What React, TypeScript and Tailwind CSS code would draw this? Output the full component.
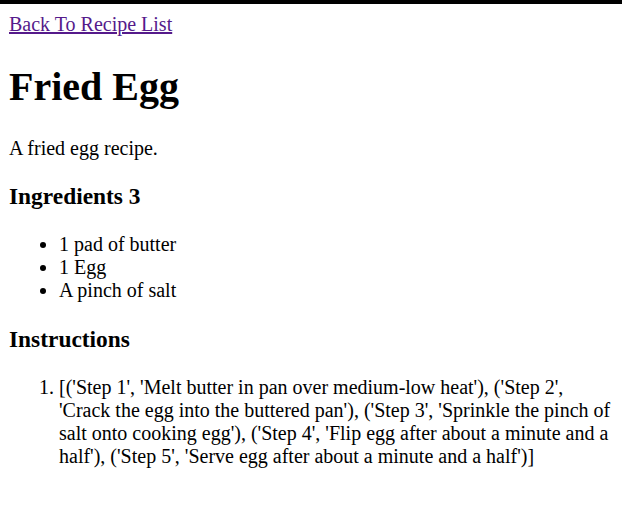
export default function App() {
  const ingredients = ["1 pad of butter", "1 Egg", "A pinch of salt"];
  const steps = [
    "[('Step 1', 'Melt butter in pan over medium-low heat'), ('Step 2', 'Crack the egg into the buttered pan'), ('Step 3', 'Sprinkle the pinch of salt onto cooking egg'), ('Step 4', 'Flip egg after about a minute and a half'), ('Step 5', 'Serve egg after about a minute and a half')]",
  ];

  return (
    <div className="min-h-screen bg-white text-black font-['Liberation_Serif',serif] text-[20px] leading-[normal]">
      <div className="h-[4px] w-full bg-black"></div>
      <div className="p-[9px]">
        <div>
          <a href="#" className="text-[#551a8b] underline">
            Back To Recipe List
          </a>
        </div>
        <h1 className="text-[40px] font-bold my-[26.8px]">Fried Egg</h1>
        <p className="my-[20px]">A fried egg recipe.</p>
        <h3 className="text-[23.4px] font-bold my-[23.4px]">Ingredients 3</h3>
        <ul className="list-disc pl-[50px] my-[20px]">
          {ingredients.map((item) => (
            <li key={item}>{item}</li>
          ))}
        </ul>
        <h3 className="text-[23.4px] font-bold my-[23.4px]">Instructions</h3>
        <ol className="list-decimal pl-[50px] my-[20px]">
          {steps.map((step, i) => (
            <li key={i}>{step}</li>
          ))}
        </ol>
      </div>
    </div>
  );
}
